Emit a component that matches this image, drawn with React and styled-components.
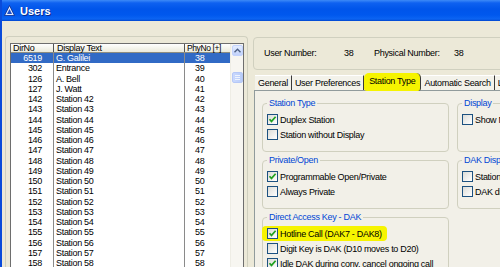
import React from 'react'
import styled, { createGlobalStyle } from 'styled-components'

const users = [
  { dir: '6519', name: 'G. Galilei', phy: '38' },
  { dir: '302', name: 'Entrance', phy: '39' },
  { dir: '126', name: 'A. Bell', phy: '40' },
  { dir: '127', name: 'J. Watt', phy: '41' },
  ...Array.from({ length: 17 }, (_, i) => ({
    dir: String(142 + i),
    name: `Station ${42 + i}`,
    phy: String(42 + i),
  })),
]

const tabs = ['General', 'User Preferences', 'Station Type', 'Automatic Search', 'Lines']

const Check = ({ checked, children, marked }) => (
  <CheckRow $marked={marked}>
    <Box>
      {checked && (
        <svg width="9" height="9" viewBox="0 0 9 9">
          <path d="M1.5 4.2 L3.5 6.4 L7.6 1.8" fill="none" stroke="#21A121" strokeWidth="1.7" />
        </svg>
      )}
    </Box>
    <span>{children}</span>
  </CheckRow>
)

const App = () => {
  return (
    <>
      <GlobalStyle />
      <Window>
        <TitleBar>
          <svg width="11" height="11" viewBox="0 0 11 11">
            <path d="M5.5 0.5 L10.5 10.5 L0.5 10.5 Z" fill="#dfe9ff" stroke="#0a2a8a" strokeWidth="0.8" />
            <path d="M5.5 4 L8 9 L3 9 Z" fill="#1f4fc8" />
          </svg>
          <Title>Users</Title>
        </TitleBar>
        <Body>
          <ListGroup>
            <ListBox>
              <Table>
                <Header>
                  <HeadCell $w={43} $pad="0 0 0 2px">DirNo</HeadCell>
                  <HeadCell $w={131} $pad="0 0 0 3px">Display Text</HeadCell>
                  <HeadCell $w={45} $pad="0 0 0 2px" $last $tight>PhyNo [+]</HeadCell>
                </Header>
                {users.map((u, i) => (
                  <Row key={u.dir} $selected={i === 0}>
                    <Cell $w={43} $align="right" $pad="0 11px 0 0">{u.dir}</Cell>
                    <Cell $w={131} $pad="0 0 0 2px">{u.name}</Cell>
                    <Cell $w={45} $pad="0 0 0 10px" $last>{u.phy}</Cell>
                  </Row>
                ))}
              </Table>
              <Scrollbar>
                <ScrollButton>
                  <svg width="7" height="5" viewBox="0 0 7 5">
                    <path d="M0.5 4.2 L3.5 1.2 L6.5 4.2" fill="none" stroke="#4d6185" strokeWidth="1.4" />
                  </svg>
                </ScrollButton>
                <Thumb>
                  <Grip />
                  <Grip />
                  <Grip />
                </Thumb>
              </Scrollbar>
            </ListBox>
          </ListGroup>
          <Side>
            <InfoPanel>
              <InfoLabel $w={80}>User Number:</InfoLabel>
              <InfoLabel $w={30}>38</InfoLabel>
              <InfoLabel $w={80}>Physical Number:</InfoLabel>
              <InfoLabel $w={30}>38</InfoLabel>
            </InfoPanel>
            <TabStrip>
              {tabs.map((t) => (
                <Tab key={t} $active={t === 'Station Type'}>{t}</Tab>
              ))}
            </TabStrip>
            <TabPanel>
              <Group>
                <Legend>Station Type</Legend>
                <Check checked>Duplex Station</Check>
                <Check>Station without Display</Check>
              </Group>
              <Group>
                <Legend>Display</Legend>
                <Check>Show Name</Check>
              </Group>
              <Group>
                <Legend>Private/Open</Legend>
                <Check checked>Programmable Open/Private</Check>
                <Check>Always Private</Check>
              </Group>
              <Group>
                <Legend>DAK Display</Legend>
                <Check>Station</Check>
                <Check>DAK display</Check>
              </Group>
              <Group>
                <Legend>Direct Access Key - DAK</Legend>
                <Check checked marked>Hotline Call (DAK7 - DAK8)</Check>
                <Check>Digit Key is DAK (D10 moves to D20)</Check>
                <Check checked>Idle DAK during conv. cancel ongoing call</Check>
              </Group>
            </TabPanel>
          </Side>
        </Body>
      </Window>
    </>
  )
}

const GlobalStyle = createGlobalStyle`
  html, body {
    margin: 0;
    padding: 0;
  }
  body {
    width: 500px;
    height: 267px;
    overflow: hidden;
    background: #ECE9D8;
    font-family: "Liberation Sans", Arial, sans-serif;
    font-size: 9px;
    letter-spacing: -0.3px;
    color: #000;
  }
`

const Window = styled.div`
  width: 500px;
  height: 267px;
  display: flex;
  flex-direction: column;
  box-sizing: border-box;
  border-left: 2px solid #0A4BDA;
  overflow: hidden;
`

const TitleBar = styled.div`
  height: 21px;
  flex-shrink: 0;
  margin-left: -2px;
  display: flex;
  align-items: center;
  gap: 5px;
  padding-left: 4px;
  background: linear-gradient(
    to bottom,
    #3D8AF7 0,
    #0E61F0 3px,
    #0055EA 9px,
    #0058EE 15px,
    #0C64F2 19px,
    #0046CF 21px
  );
`

const Title = styled.span`
  color: #fff;
  font-weight: bold;
  font-size: 11px;
  letter-spacing: 0;
  text-shadow: 1px 1px 0 #0A2A8A;
`

const Body = styled.div`
  flex: 1;
  display: flex;
  gap: 5px;
  padding: 15px 0 0 3px;
  min-height: 0;
`

const ListGroup = styled.div`
  width: 243px;
  flex-shrink: 0;
  box-sizing: border-box;
  border: 1px solid #D0D0BF;
  border-bottom: none;
  border-radius: 4px 4px 0 0;
  padding: 6px 3px 0 4px;
`

const ListBox = styled.div`
  width: 234px;
  height: 240px;
  box-sizing: border-box;
  border: 1px solid #6E6E6E;
  border-bottom: none;
  background: #fff;
  display: flex;
`

const Table = styled.div`
  width: 219px;
  flex-shrink: 0;
`

const Header = styled.div`
  display: flex;
  height: 8px;
  line-height: 8px;
  border-bottom: 1px solid #8C8C80;
  background: linear-gradient(#FFFFFF, #EBEADB);
`

const HeadCell = styled.div`
  width: ${(p) => p.$w}px;
  box-sizing: border-box;
  padding: ${(p) => p.$pad};
  font-size: ${(p) => (p.$tight ? '8.5px' : '9px')};
  letter-spacing: ${(p) => (p.$tight ? '-0.4px' : '-0.3px')};
  border-right: ${(p) => (p.$last ? 'none' : '1px solid #555')};
  white-space: nowrap;
`

const Row = styled.div`
  display: flex;
  height: 10.25px;
  line-height: 10.25px;
  background: ${(p) => (p.$selected ? '#316AC5' : 'transparent')};
  color: ${(p) => (p.$selected ? '#fff' : '#000')};
`

const Cell = styled.div`
  width: ${(p) => p.$w}px;
  box-sizing: border-box;
  padding: ${(p) => p.$pad};
  text-align: ${(p) => p.$align || 'left'};
  border-right: ${(p) => (p.$last ? 'none' : '1px solid #8A8A8A')};
  white-space: nowrap;
  overflow: hidden;
`

const Scrollbar = styled.div`
  flex: 1;
  background: #F7F6F1;
  border-left: 1px solid #EEEDE5;
  padding-top: 1px;
  display: flex;
  flex-direction: column;
  align-items: center;
  position: relative;
  z-index: 1;
`

const ScrollButton = styled.div`
  width: 11px;
  height: 11px;
  box-sizing: border-box;
  border: 1px solid #C3D3FD;
  border-radius: 2px;
  background: linear-gradient(#E4EDFF, #C1D2FB);
  display: flex;
  align-items: center;
  justify-content: center;
`

const Thumb = styled.div`
  width: 11px;
  height: 11px;
  margin-top: 16px;
  box-sizing: border-box;
  border: 1px solid #B5C8F7;
  border-radius: 2px;
  background: linear-gradient(to right, #CAD9FD, #B8CCF9);
  display: flex;
  flex-direction: column;
  align-items: center;
  justify-content: center;
  gap: 1px;
`

const Grip = styled.div`
  width: 5px;
  height: 1px;
  background: #EEF4FE;
`

const Side = styled.div`
  width: 320px;
  flex-shrink: 0;
  display: flex;
  flex-direction: column;
`

const InfoPanel = styled.div`
  height: 33px;
  flex-shrink: 0;
  margin-top: 1px;
  box-sizing: border-box;
  border: 1px solid #D0D0BF;
  border-radius: 4px;
  display: flex;
  align-items: center;
  padding: 0 0 1px 10px;
`

const InfoLabel = styled.span`
  width: ${(p) => p.$w}px;
  flex-shrink: 0;
  white-space: nowrap;
`

const TabStrip = styled.div`
  display: flex;
  flex-shrink: 0;
  align-items: flex-end;
  height: 17px;
  margin-top: 3px;
  padding-left: 2px;
  position: relative;
  z-index: 1;
`

const Tab = styled.div`
  height: ${(p) => (p.$active ? '18px' : '15px')};
  line-height: ${(p) => (p.$active ? '17px' : '15px')};
  margin-bottom: ${(p) => (p.$active ? '-1px' : '0')};
  padding: 0 ${(p) => (p.$active ? '5px' : '3px')};
  box-sizing: border-box;
  white-space: nowrap;
  background: ${(p) => (p.$active ? '#F6F400' : '#F3F2EA')};
  border-right: 1px solid #3A3A3A;
  border-top: ${(p) => (p.$active ? 'none' : '1px solid #FFFFFF')};
  border-radius: ${(p) => (p.$active ? '5px 5px 3px 3px' : '0')};
`

const TabPanel = styled.div`
  flex: 1;
  min-height: 0;
  margin-left: 1px;
  border: 1px solid #919B9C;
  border-bottom: none;
  background: #F2F0E8;
  padding: 7px 0 0 7px;
  display: grid;
  grid-template-columns: 187px 130px;
  grid-auto-rows: min-content;
  column-gap: 8px;
  row-gap: 3px;
`

const Group = styled.fieldset`
  margin: 0;
  min-width: 0;
  border: 1px solid #D0D0BF;
  border-radius: 4px;
  padding: 4px 0 9px 4px;
  display: flex;
  flex-direction: column;
`

const Legend = styled.legend`
  color: #0046D5;
  padding: 0 2px;
  height: 10px;
  line-height: 10px;
`

const CheckRow = styled.div`
  display: flex;
  align-items: center;
  gap: 2px;
  height: 15px;
  white-space: nowrap;
  align-self: flex-start;
  ${(p) =>
    p.$marked &&
    `
    background: #F6F400;
    margin-left: -5px;
    padding: 0 5px;
    border-radius: 4px;
  `}
`

const Box = styled.div`
  width: 11px;
  height: 11px;
  flex-shrink: 0;
  box-sizing: border-box;
  border: 1px solid #1C5180;
  background: linear-gradient(135deg, #DCDCD7, #FFFFFF);
  display: flex;
  align-items: center;
  justify-content: center;
`

export default App
